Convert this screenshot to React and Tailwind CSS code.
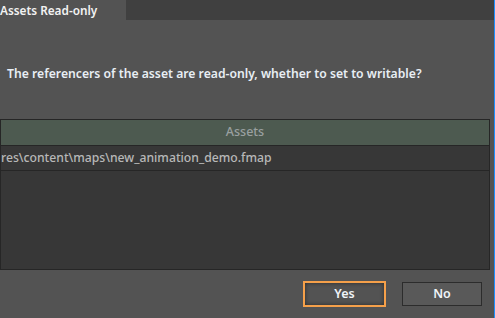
const App = () => {
  return (
    <div
      className="w-[495px] h-[318px] bg-[#535353] flex flex-col border-r border-[#1e90ff] overflow-hidden"
      style={{ fontFamily: '"Noto Sans", "DejaVu Sans", sans-serif' }}
    >
      {/* Tabs */}
      <div className="h-[20px] bg-[#404040] flex">
        <div className="w-[126px] h-full bg-[#535353] text-[11.8px] font-semibold text-[#f2f2f2] leading-[20px] whitespace-nowrap">
          Assets Read-only
        </div>
      </div>

      {/* Message */}
      <div className="pt-[44px] pl-[7px] h-[99px] text-[12.2px] font-semibold text-[#e8eef4] whitespace-nowrap leading-[20px]">
        The referencers of the asset are read-only, whether to set to writable?
      </div>

      {/* Table */}
      <div className="mr-[4px] h-[151px] border border-[#262626] bg-[#373737] flex flex-col">
        <div className="h-[26px] bg-[#4d5a50] border-b border-[#262626] text-[12.5px] text-[#9aa0a0] font-medium flex items-center justify-center">
          Assets
        </div>
        <div className="h-[25px] border-b border-[#262626] text-[12.2px] text-[#b8b8b8] font-medium flex items-center whitespace-nowrap">
          res\content\maps\new_animation_demo.fmap
        </div>
      </div>

      {/* Buttons */}
      <div className="flex justify-end gap-[16px] pr-[12px] pt-[11px]">
        <button className="w-[83px] h-[26px] border-2 border-[#f5a04a] bg-[#535353] shadow-[inset_0_0_4px_rgba(0,0,0,0.5)] text-[12.5px] font-semibold text-[#f0f4f8]">
          Yes
        </button>
        <button className="w-[80px] h-[24px] mt-[1px] border border-[#2c2c2c] bg-[#595959] text-[12.5px] font-semibold text-[#f0f4f8]">
          No
        </button>
      </div>
    </div>
  );
};

export default App;
